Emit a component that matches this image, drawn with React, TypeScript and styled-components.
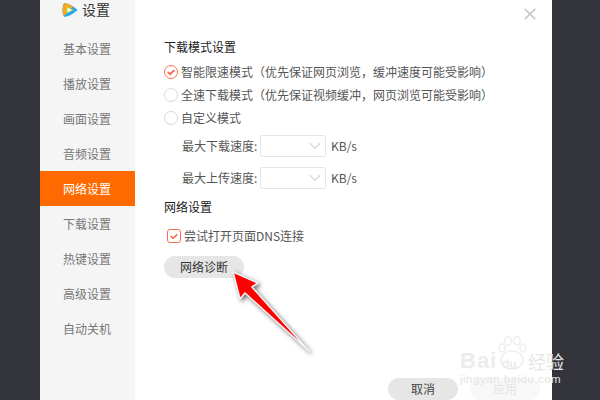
import React from "react";
import styled, { createGlobalStyle } from "styled-components";

const Global = createGlobalStyle`
  html, body { margin: 0; padding: 0; background: #32333b; }
  * { box-sizing: border-box; }
`;
const Page = styled.div`
  position: relative; width: 600px; height: 400px; overflow: hidden;
  padding-left: 40px; background: #32333b;
  font-family: "Noto Sans CJK SC", "Liberation Sans", sans-serif;
  font-size: 12px; line-height: 16px;
`;
const Dialog = styled.div`
  display: flex; width: 512px; height: 400px; background: #fff;
`;
const Sidebar = styled.nav`
  width: 95px; flex: none; background: #f5f5f5;
`;
const Brand = styled.div`
  display: flex; align-items: center; height: 31px; padding: 0 0 11px 22px; gap: 4px;
  font-size: 14px; line-height: 18px; color: #333;
`;
const BrandText = styled.span`
  margin-top: -2px;
`;
const NavItem = styled.div<{ $active?: boolean }>`
  height: 35px; display: flex; align-items: center; padding-left: 23px;
  color: ${p => (p.$active ? "#fff" : "#777")};
  background: ${p => (p.$active ? "#ff6a00" : "transparent")};
`;
const Main = styled.main`
  position: relative; flex: 1; padding: 39px 0 0 29px;
`;
const Close = styled.svg`
  position: absolute; top: 8px; right: 16px;
`;
const Heading = styled.h2`
  margin: 0; font-size: 12px; font-weight: 400; line-height: 16px; color: #222;
`;
const Options = styled.div`
  display: flex; flex-direction: column; gap: 7px; margin-top: 9px;
`;
const Option = styled.div`
  display: flex; align-items: center; gap: 3px; height: 16px; color: #555; white-space: nowrap;
`;
const RadioEmpty = styled.span`
  width: 14px; height: 14px; border-radius: 50%; border: 1px solid #d8d8d8; background: #fff;
`;
const LimitRows = styled.div`
  display: flex; flex-direction: column; gap: 10px; margin: 9px 0 0 18px;
`;
const LimitRow = styled.div`
  display: flex; align-items: center; height: 22px; color: #555;
`;
const LimitLabel = styled.span`
  width: 78px; white-space: nowrap;
`;
const SelectBox = styled.div`
  display: flex; align-items: center; justify-content: flex-end; padding-right: 4px;
  width: 66px; height: 22px; border: 1px solid #e6e6e6; border-radius: 2px; background: #fff;
`;
const Unit = styled.span`
  margin-left: 5px;
`;
const NetHeading = styled(Heading)`
  margin-top: 10px;
`;
const CheckRow = styled.div`
  display: flex; align-items: center; gap: 3px; height: 16px; margin: 13px 0 0 3px; color: #555;
`;
const Pill = styled.button<{ $muted?: boolean }>`
  display: block; width: 70px; height: 22px; border: 0; border-radius: 11px; padding: 0;
  font: inherit; font-size: 12px; line-height: 22px;
  background: ${p => (p.$muted ? "#f8f8f8" : "#e6e6e6")};
  color: ${p => (p.$muted ? "#e4e4e4" : "#444")};
`;
const DiagnoseButton = styled(Pill)`
  width: 80px; margin-top: 12px; color: #333;
`;
const Footer = styled.div`
  position: absolute; left: 253px; top: 378px; display: flex; gap: 12px;
`;
const Arrow = styled.svg`
  position: absolute; left: 225px; top: 265px; overflow: visible;
  filter: drop-shadow(2px 2px 2px rgba(0, 0, 0, .55));
`;
const Watermark = styled.div`
  position: absolute; left: 458px; top: 334px; width: 142px; height: 66px;
`;
const WmBai = styled.div`
  position: absolute; left: 2px; top: 16px;
  font: 700 22px/22px "Liberation Sans", sans-serif; letter-spacing: 1px;
  color: #ececec;
`;
const WmDu = styled.div`
  position: absolute; left: 44px; top: 24px;
  font: 700 12px/13px "Liberation Sans", sans-serif;
  color: #ececec;
`;
const WmCn = styled.div`
  position: absolute; left: 70px; top: 15px;
  font: 400 18px/24px "Noto Sans CJK SC", sans-serif;
  color: #e6e6e8;
`;
const WmUrl = styled.div`
  position: absolute; left: 2px; top: 38px;
  font: 400 11.5px/14px "Liberation Sans", sans-serif; letter-spacing: .5px; color: #e4e4e6;
`;
const Paw = styled.svg`
  position: absolute; left: 38px; top: 1px;
`;

const Logo = () => (
  <svg width="16" height="16" viewBox="0 0 16 16">
    <path d="M2 1.2 C6 1.2 11 3.8 15.6 8 C11 12.2 6 14.8 2 14.8 C0 11 0 5 2 1.2Z" fill="#2aa6ea" />
    <path d="M2 1.2 C6 1.2 9 3 11 4.8 L4 12 C2 14 1.2 14 1 12.4 C.2 9 .6 4 2 1.2Z" fill="#f6a623" />
    <path d="M4.6 4.6 L11.4 8 L4.6 11.4 C4.1 9 4.1 7 4.6 4.6Z" fill="#b7e04b" />
    <path d="M5.6 5.8 L9.6 8 L5.6 10.2Z" fill="#fff" />
  </svg>
);
const RadioChecked = () => (
  <svg width="14" height="14" viewBox="0 0 14 14">
    <circle cx="7" cy="7" r="6.5" fill="#fff" stroke="#f9704f" />
    <path d="M3.8 7 L6.1 9.2 L10.3 5.2" fill="none" stroke="#f9603d" strokeWidth="1.7" />
  </svg>
);
const Checkbox = () => (
  <svg width="14" height="14" viewBox="0 0 14 14">
    <rect x=".5" y=".5" width="13" height="13" rx="2.5" fill="#fff" stroke="#f9704f" />
    <path d="M3.8 7 L6.1 9.2 L10.3 5.2" fill="none" stroke="#f9603d" strokeWidth="1.5" />
  </svg>
);
const Chevron = () => (
  <svg width="12" height="8" viewBox="0 0 12 8">
    <path d="M1 1.2 L6 6.2 L11 1.2" fill="none" stroke="#dcdcdc" strokeWidth="1.6" />
  </svg>
);

const nav = ["基本设置", "播放设置", "画面设置", "音频设置", "网络设置", "下载设置", "热键设置", "高级设置", "自动关机"];

export default function App() {
  return (
    <Page>
      <Global />
      <Dialog>
        <Sidebar>
          <Brand><Logo /><BrandText>设置</BrandText></Brand>
          {nav.map((n, i) => <NavItem key={n} $active={i === 4}>{n}</NavItem>)}
        </Sidebar>
        <Main>
          <Close width="12" height="12" viewBox="0 0 12 12">
            <path d="M.7 .7 L11.3 11.3 M11.3 .7 L.7 11.3" stroke="#c4c4c4" strokeWidth="1.6" />
          </Close>
          <Heading>下载模式设置</Heading>
          <Options>
            <Option><RadioChecked />智能限速模式（优先保证网页浏览，缓冲速度可能受影响）</Option>
            <Option><RadioEmpty />全速下载模式（优先保证视频缓冲，网页浏览可能受影响）</Option>
            <Option><RadioEmpty />自定义模式</Option>
          </Options>
          <LimitRows>
            <LimitRow><LimitLabel>最大下载速度:</LimitLabel><SelectBox><Chevron /></SelectBox><Unit>KB/s</Unit></LimitRow>
            <LimitRow><LimitLabel>最大上传速度:</LimitLabel><SelectBox><Chevron /></SelectBox><Unit>KB/s</Unit></LimitRow>
          </LimitRows>
          <NetHeading>网络设置</NetHeading>
          <CheckRow><Checkbox />尝试打开页面DNS连接</CheckRow>
          <DiagnoseButton>网络诊断</DiagnoseButton>
          <Footer>
            <Pill>取消</Pill>
            <Pill $muted>应用</Pill>
          </Footer>
        </Main>
      </Dialog>
      <Arrow width="90" height="90" viewBox="225 265 90 90">
        <path d="M233 272 L258 283 L252 287 L309 351 L245 293 L240 299Z" fill="#f00" stroke="#f2f2f2" strokeWidth="1.6" strokeLinejoin="round" />
      </Arrow>
      <Watermark>
        <Paw width="32" height="36" viewBox="0 0 32 36">
          <g fill="#fff" stroke="#ececec" strokeWidth="1.4">
            <ellipse cx="6" cy="13" rx="3" ry="4" />
            <ellipse cx="12" cy="6" rx="3.2" ry="4.5" />
            <ellipse cx="21" cy="6" rx="3.2" ry="4.5" />
            <ellipse cx="27" cy="13" rx="3" ry="4" />
            <ellipse cx="16" cy="25" rx="11" ry="9" />
          </g>
        </Paw>
        <WmBai>Bai</WmBai>
        <WmDu>du</WmDu>
        <WmCn>经验</WmCn>
        <WmUrl>jingyan.baidu.com</WmUrl>
      </Watermark>
    </Page>
  );
}
